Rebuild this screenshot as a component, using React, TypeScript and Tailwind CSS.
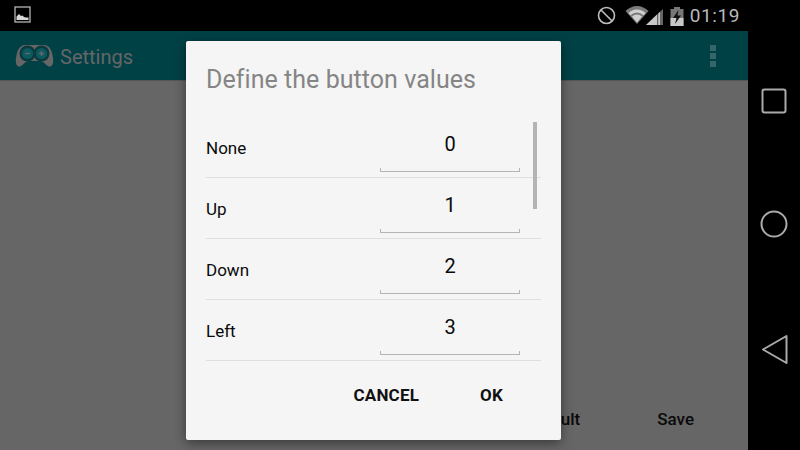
const font = { fontFamily: "Roboto, 'Noto Sans', sans-serif" };

function Row({ label, value }: { label: string; value: string }) {
  return (
    <div className="flex h-[61px] shrink-0 items-start border-b border-[#dfdfdf]">
      <div className="w-[174px] pt-[22px] text-[17px] leading-[19px] text-[#0a0a0a]">{label}</div>
      <div className="w-[140px]">
        <div className="h-[43px] pt-[15px] text-center text-[20px] leading-[24px] text-[#0a0a0a]">{value}</div>
        <div className="mt-[8px] h-[4px] border-x border-b border-[#b4b4b4]" />
      </div>
    </div>
  );
}

export default function App() {
  return (
    <div className="relative flex h-[450px] w-[800px] flex-col overflow-hidden bg-black" style={font}>
      {/* status bar */}
      <div className="flex h-[31px] shrink-0 items-center justify-between bg-black pl-[14px] pr-[60px]">
        <svg width="17" height="17" viewBox="0 0 17 17" className="mb-[2px]">
          <rect x="1" y="1" width="15" height="15" fill="none" stroke="#b5b5b5" strokeWidth="1.3" />
          <path d="M2.5 14 V10.5 L5 8 L7 10 L8.5 9.5 L10 11 L12 11.5 L14.5 11.5 V14 Z" fill="#d8d8d8" />
        </svg>
        <div className="flex items-center">
          <svg width="19" height="19" viewBox="0 0 19 19" className="mr-[9px]">
            <circle cx="9.5" cy="9.5" r="8" fill="none" stroke="#bdbdbd" strokeWidth="1.6" />
            <path d="M4 4 L15 15" stroke="#bdbdbd" strokeWidth="1.6" />
          </svg>
          <svg width="24" height="20" viewBox="0 0 24 20" className="mb-[2px]">
            <path d="M0.5 6 A16 16 0 0 1 23.5 6 L12 19 Z" fill="#7a7a7a" />
            <path d="M3.5 8 A12 12 0 0 1 20.5 8 L18.5 10.2 A9 9 0 0 0 5.5 10.2 Z" fill="#d0d0d0" />
            <path d="M7 11.5 A7 7 0 0 1 17 11.5 L12 17.5 Z" fill="#d0d0d0" />
          </svg>
          <svg width="18" height="20" viewBox="0 0 18 20" className="ml-[-3px] mr-[6px]">
            <path d="M0 19 L17 3 V19 Z" fill="#666" />
            <path d="M0 19 L11 8.6 V19 Z" fill="#c8c8c8" />
            <path d="M12.3 19 V7.4 L14 5.8 V19 Z" fill="#c8c8c8" />
          </svg>
          <svg width="14" height="20" viewBox="0 0 14 20" className="mr-[6px]">
            <path d="M4 1 H10 V3 H13.5 V20 H0.5 V3 H4 Z" fill="#777" />
            <path d="M0.5 12 H13.5 V20 H0.5 Z" fill="#c8c8c8" />
            <path d="M8.5 4 L3 12 H6.5 L5 18 L11 9.5 H7.5 Z" fill="#111" />
          </svg>
          <span className="text-[19px] leading-[31px] tracking-[0.6px] text-[#b9b9b9]">01:19</span>
        </div>
      </div>

      <div className="flex min-h-0 flex-1">
        {/* app surface */}
        <div className="flex w-[748px] flex-col bg-[#666666]">
          <div className="flex h-[50px] shrink-0 items-center justify-between border-b border-[#555] bg-[#004146] pl-[15px] pr-[32px]">
            <div className="flex items-center">
              <svg width="39" height="24" viewBox="0 0 39 24" className="mr-[6px]">
                <path d="M10 1 H29 C34 1 37 6 38 14 C39 21 36 24 33 22 C30 20 28 17 25 17 H14 C11 17 9 20 6 22 C3 24 0 21 1 14 C2 6 5 1 10 1 Z" fill="#666" />
                <circle cx="12.5" cy="9.5" r="8" fill="#0a3a3e" />
                <circle cx="26.5" cy="9.5" r="8" fill="#0a3a3e" />
                <circle cx="12.5" cy="9.5" r="5.6" fill="#0b5a60" />
                <circle cx="26.5" cy="9.5" r="5.6" fill="#0b5a60" />
                <path d="M10 9.5 H15" stroke="#666" strokeWidth="1.5" />
                <path d="M24 9.5 H29 M26.5 7 V12" stroke="#666" strokeWidth="1.5" />
              </svg>
              <span className="pt-[2px] text-[20px] leading-[26px] text-[#666]">Settings</span>
            </div>
            <div className="flex flex-col gap-[2px]">
              <div className="h-[6px] w-[6px] bg-[#35666a]" />
              <div className="h-[6px] w-[6px] bg-[#35666a]" />
              <div className="h-[6px] w-[6px] bg-[#35666a]" />
            </div>
          </div>
          <div className="flex-1" />
          <div className="flex h-[60px] shrink-0 items-center justify-end text-[17px] font-medium text-[#0a0a0a]">
            <span className="mr-[77px]">Default</span>
            <span className="mr-[54px]">Save</span>
          </div>
        </div>

        {/* nav bar */}
        <div className="flex w-[52px] flex-col items-center justify-between bg-black pb-[85px] pt-[57px]">
          <svg width="26" height="26" viewBox="0 0 26 26">
            <rect x="1.5" y="1.5" width="23" height="23" rx="2" fill="none" stroke="#aaa" strokeWidth="2" />
          </svg>
          <svg width="28" height="28" viewBox="0 0 28 28">
            <circle cx="14" cy="14" r="12.5" fill="none" stroke="#aaa" strokeWidth="2" />
          </svg>
          <svg width="27" height="31" viewBox="0 0 27 31">
            <path d="M25.5 2 V29 L2 15.5 Z" fill="none" stroke="#aaa" strokeWidth="2" strokeLinejoin="round" />
          </svg>
        </div>
      </div>

      {/* dialog */}
      <div className="absolute left-[186px] top-[41px] flex h-[399px] w-[375px] flex-col rounded-[2px] bg-[#f5f5f5] shadow-[0_3px_12px_rgba(0,0,0,0.45)]">
        <div className="h-[76px] shrink-0 pl-[20px] pt-[24px] text-[25px] leading-[30px] tracking-[0.05px] text-[#858585]">
          Define the button values
        </div>
        <div className="relative ml-[20px] mr-[20px] flex h-[243px] shrink-0 flex-col">
          <Row label="None" value="0" />
          <Row label="Up" value="1" />
          <Row label="Down" value="2" />
          <Row label="Left" value="3" />
          <div className="absolute left-[327px] top-[5px] h-[87px] w-[4px] bg-[#b4b4b4]" />
        </div>
        <div className="flex flex-1 items-start justify-end pr-[58px] pt-[25px] text-[17px] font-bold leading-[20px] tracking-[0.2px] text-[#111]">
          <span className="mr-[61px]">CANCEL</span>
          <span>OK</span>
        </div>
      </div>
    </div>
  );
}
